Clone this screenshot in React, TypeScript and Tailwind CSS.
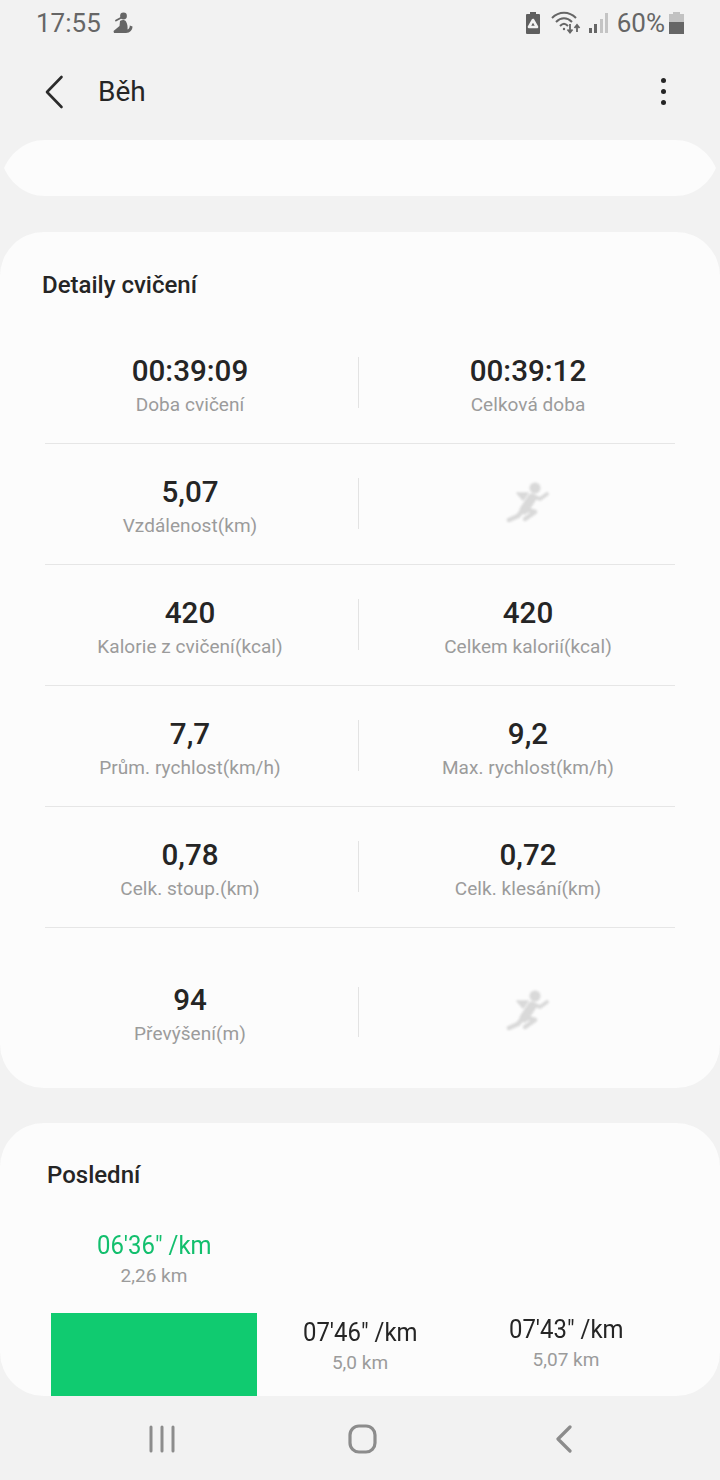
function Runner() {
  return (
    <svg width="100" height="70" viewBox="0 0 100 70" className="ml-[4px] blur-[0.8px]" fill="none" stroke="#d9d9d9" strokeLinecap="round" strokeLinejoin="round">
      <circle cx="55" cy="19" r="5.500" fill="#d9d9d9" stroke="none" />
      <path d="M52 29 L44 41" strokeWidth="9" />
      <path d="M53 27 L60 30 L67 25" strokeWidth="3.600" />
      <path d="M37 24 L48 24 L43 31 Z" fill="#d9d9d9" strokeWidth="1.500" />
      <path d="M42 42 L38 47 L29 51" strokeWidth="4.500" />
      <path d="M45 40 L55 43 L45 50" strokeWidth="4.500" />
    </svg>
  );
}

function Cell({ value, label }: { value?: string; label?: string }) {
  if (!value) {
    return (
      <div className="flex h-[62px] items-center justify-center">
        <Runner />
      </div>
    );
  }
  return (
    <div className="flex h-[68px] flex-col items-center justify-start">
      <div className="h-[38px] text-[29.600px] leading-[38px] font-medium text-[#252525]">{value}</div>
      <div className="mt-[1px] h-[28px] text-[19px] leading-[28px] tracking-[0.05px] text-[#9b9b9b]">{label}</div>
    </div>
  );
}

function Row({ left, right, last }: { left: [string, string]; right?: [string, string]; last?: boolean }) {
  return (
    <div className={last ? "mx-[45px] flex items-start pt-[53px]" : "mx-[45px] flex h-[121px] items-start border-b border-[#e6e6e6] pt-[29px]"}>
      <div className="w-[290px]">
        <Cell value={left[0]} label={left[1]} />
      </div>
      <div className={last ? "mt-[6px] ml-[23px] h-[50px] w-px bg-[#e3e3e3]" : "mt-[5px] ml-[23px] h-[51px] w-px bg-[#e3e3e3]"} />
      <div className="ml-[22px] w-[294px]">
        <Cell value={right?.[0]} label={right?.[1]} />
      </div>
    </div>
  );
}

function Pace({ value, sub, green, cls, bar }: { value: string; sub: string; green?: boolean; cls: string; bar?: boolean }) {
  return (
    <div className={`flex w-[206px] flex-col items-center ${cls}`}>
      <div className={`scale-x-[0.92] text-[26px] leading-[32px] ${green ? "text-[#12bf6d]" : "text-[#252525]"}`}>{value}</div>
      <div className="mt-[2px] text-[19px] leading-[26px] text-[#9b9b9b]">{sub}</div>
      {bar && <div className="mt-[24px] h-[83px] w-[206px] bg-[#10cb70]" />}
    </div>
  );
}

export default function App() {
  return (
    <div className="flex h-[1480px] w-[720px] flex-col overflow-hidden bg-[#f2f2f2] font-['Roboto',sans-serif]">
      {/* status bar */}
      <div className="flex h-[46px] items-center justify-between pr-[36px] pl-[36px] text-[26px] text-[#666666]">
        <div className="flex items-center gap-[12px]">
          <span className="leading-[46px]">17:55</span>
          <svg width="20" height="22" viewBox="0 0 20 22" fill="#666666">
            <circle cx="10.500" cy="4" r="3.400" />
            <path d="M9.500 5 L3 8.500" stroke="#666666" strokeWidth="1.800" strokeLinecap="round" />
            <path d="M7 9 C9 7.500 12 7.500 13 9.500 C14.500 12 14.800 15 14.500 17.500 C16 17 16.800 15.500 16.800 13.500 L19.500 14.500 C19.500 18 17 21 13 21 L1 21 L0.500 19 L6.500 14 Z" />
          </svg>
        </div>
        <div className="flex items-center">
          <svg width="16" height="24" viewBox="0 0 16 24" className="mr-[10px]">
            <path d="M5 1 H11 V3 H14 Q15 3 15 4 V22 Q15 23 14 23 H2 Q1 23 1 22 V4 Q1 3 2 3 H5 Z" fill="#5f5f5f" />
            <path d="M8 9 L12 16 H4 Z" fill="#5f5f5f" stroke="#f2f2f2" strokeWidth="2.600" strokeLinejoin="round" />
          </svg>
          <svg width="30" height="24" viewBox="0 0 30 24" fill="none" stroke="#666666" strokeWidth="2" className="mr-[8px]">
            <path d="M1 7 C8 0 18 0 25 7" />
            <path d="M5 11 C10 6 16 6 21 11" />
            <path d="M9 15 C12 12 14 12 17 15" />
            <circle cx="13" cy="18" r="1.200" fill="#666666" stroke="none" />
            <path d="M19 13 V21 M16.500 18.500 L19 21.500 L21.500 18.500 M26 21 V15 M23.500 17 L26 14 L28.500 17" strokeWidth="1.800" />
          </svg>
          <svg width="20" height="22" viewBox="0 0 20 22" className="mr-[8px]">
            <rect x="0" y="16" width="3" height="5" fill="#666666" />
            <rect x="5" y="12" width="3" height="9" fill="#666666" />
            <rect x="11" y="7" width="3" height="14" fill="#c4c4c4" />
            <rect x="16" y="1" width="3" height="20" fill="#c4c4c4" />
          </svg>
          <span className="leading-[46px]">60%</span>
          <svg width="15" height="22" viewBox="0 0 15 22" className="ml-[4px]">
            <path d="M4 0 H11 V2 H15 V10 H0 V2 H4 Z" fill="#c2c2c2" />
            <rect x="0" y="10" width="15" height="12" fill="#666666" />
          </svg>
        </div>
      </div>

      {/* app bar */}
      <div className="flex h-[94px] items-center justify-between pr-[54px] pb-[2px] pl-[44px]">
        <div className="flex items-center">
          <svg width="20" height="34" viewBox="0 0 20 34" fill="none" stroke="#2b2b2b" strokeWidth="2.600" strokeLinecap="round" strokeLinejoin="round" className="mb-[1px]">
            <path d="M17.500 2 L3 17 L17.500 32" />
          </svg>
          <span className="ml-[34px] text-[28px] leading-[36px] text-[#252525]">Běh</span>
        </div>
        <div className="mb-[2px] flex flex-col gap-[6px]">
          <span className="h-[5px] w-[5px] rounded-full bg-[#252525]" />
          <span className="h-[5px] w-[5px] rounded-full bg-[#252525]" />
          <span className="h-[5px] w-[5px] rounded-full bg-[#252525]" />
        </div>
      </div>

      {/* clipped card */}
      <div className="mx-[3px] h-[56px] bg-[#fcfcfc] [clip-path:path('M1_28_C8_13_22_0_42_0_H672_C692_0_706_13_713_28_C706_43_692_56_672_56_H42_C22_56_8_43_1_28_Z')]" />

      {/* details */}
      <div className="mt-[36px] h-[856px] rounded-[44px] bg-[#fcfcfc]">
        <div className="h-[91px] pt-[37px] pl-[42px] text-[24px] leading-[32px] font-medium text-[#252525]">Detaily cvičení</div>
        <Row left={["00:39:09", "Doba cvičení"]} right={["00:39:12", "Celková doba"]} />
        <Row left={["5,07", "Vzdálenost(km)"]} />
        <Row left={["420", "Kalorie z cvičení(kcal)"]} right={["420", "Celkem kalorií(kcal)"]} />
        <Row left={["7,7", "Prům. rychlost(km/h)"]} right={["9,2", "Max. rychlost(km/h)"]} />
        <Row left={["0,78", "Celk. stoup.(km)"]} right={["0,72", "Celk. klesání(km)"]} />
        <Row left={["94", "Převýšení(m)"]} last />
      </div>

      {/* last */}
      <div className="mt-[35px] h-[273px] overflow-hidden rounded-[44px] bg-[#fcfcfc]">
        <div className="h-[90px] pt-[36px] pl-[47px] text-[24px] leading-[32px] font-medium text-[#252525]">Poslední</div>
        <div className="flex h-[183px] items-start pl-[51px]">
          <Pace value={`06'36" /km`} sub="2,26 km" green cls="pt-[16px]" bar />
          <Pace value={`07'46" /km`} sub="5,0 km" cls="pt-[103px]" />
          <Pace value={`07'43" /km`} sub="5,07 km" cls="pt-[100px]" />
        </div>
      </div>

      {/* nav */}
      <div className="flex flex-1 items-center justify-center pt-[2px] pl-[6px]">
        <div className="flex w-[201px] justify-center">
          <svg width="28" height="28" viewBox="0 0 28 28" stroke="#8c8c8c" strokeWidth="3" strokeLinecap="round">
            <path d="M3 2 V26 M14 2 V26 M25 2 V26" />
          </svg>
        </div>
        <div className="flex w-[201px] justify-center">
          <svg width="30" height="30" viewBox="0 0 30 30" fill="none" stroke="#8c8c8c" strokeWidth="3.200">
            <rect x="2" y="2" width="25" height="26" rx="9" />
          </svg>
        </div>
        <div className="flex w-[201px] justify-center">
          <svg width="18" height="28" viewBox="0 0 18 28" fill="none" stroke="#8c8c8c" strokeWidth="3.200" strokeLinecap="round" strokeLinejoin="round">
            <path d="M15 2 L3 14 L15 26" />
          </svg>
        </div>
      </div>
    </div>
  );
}
